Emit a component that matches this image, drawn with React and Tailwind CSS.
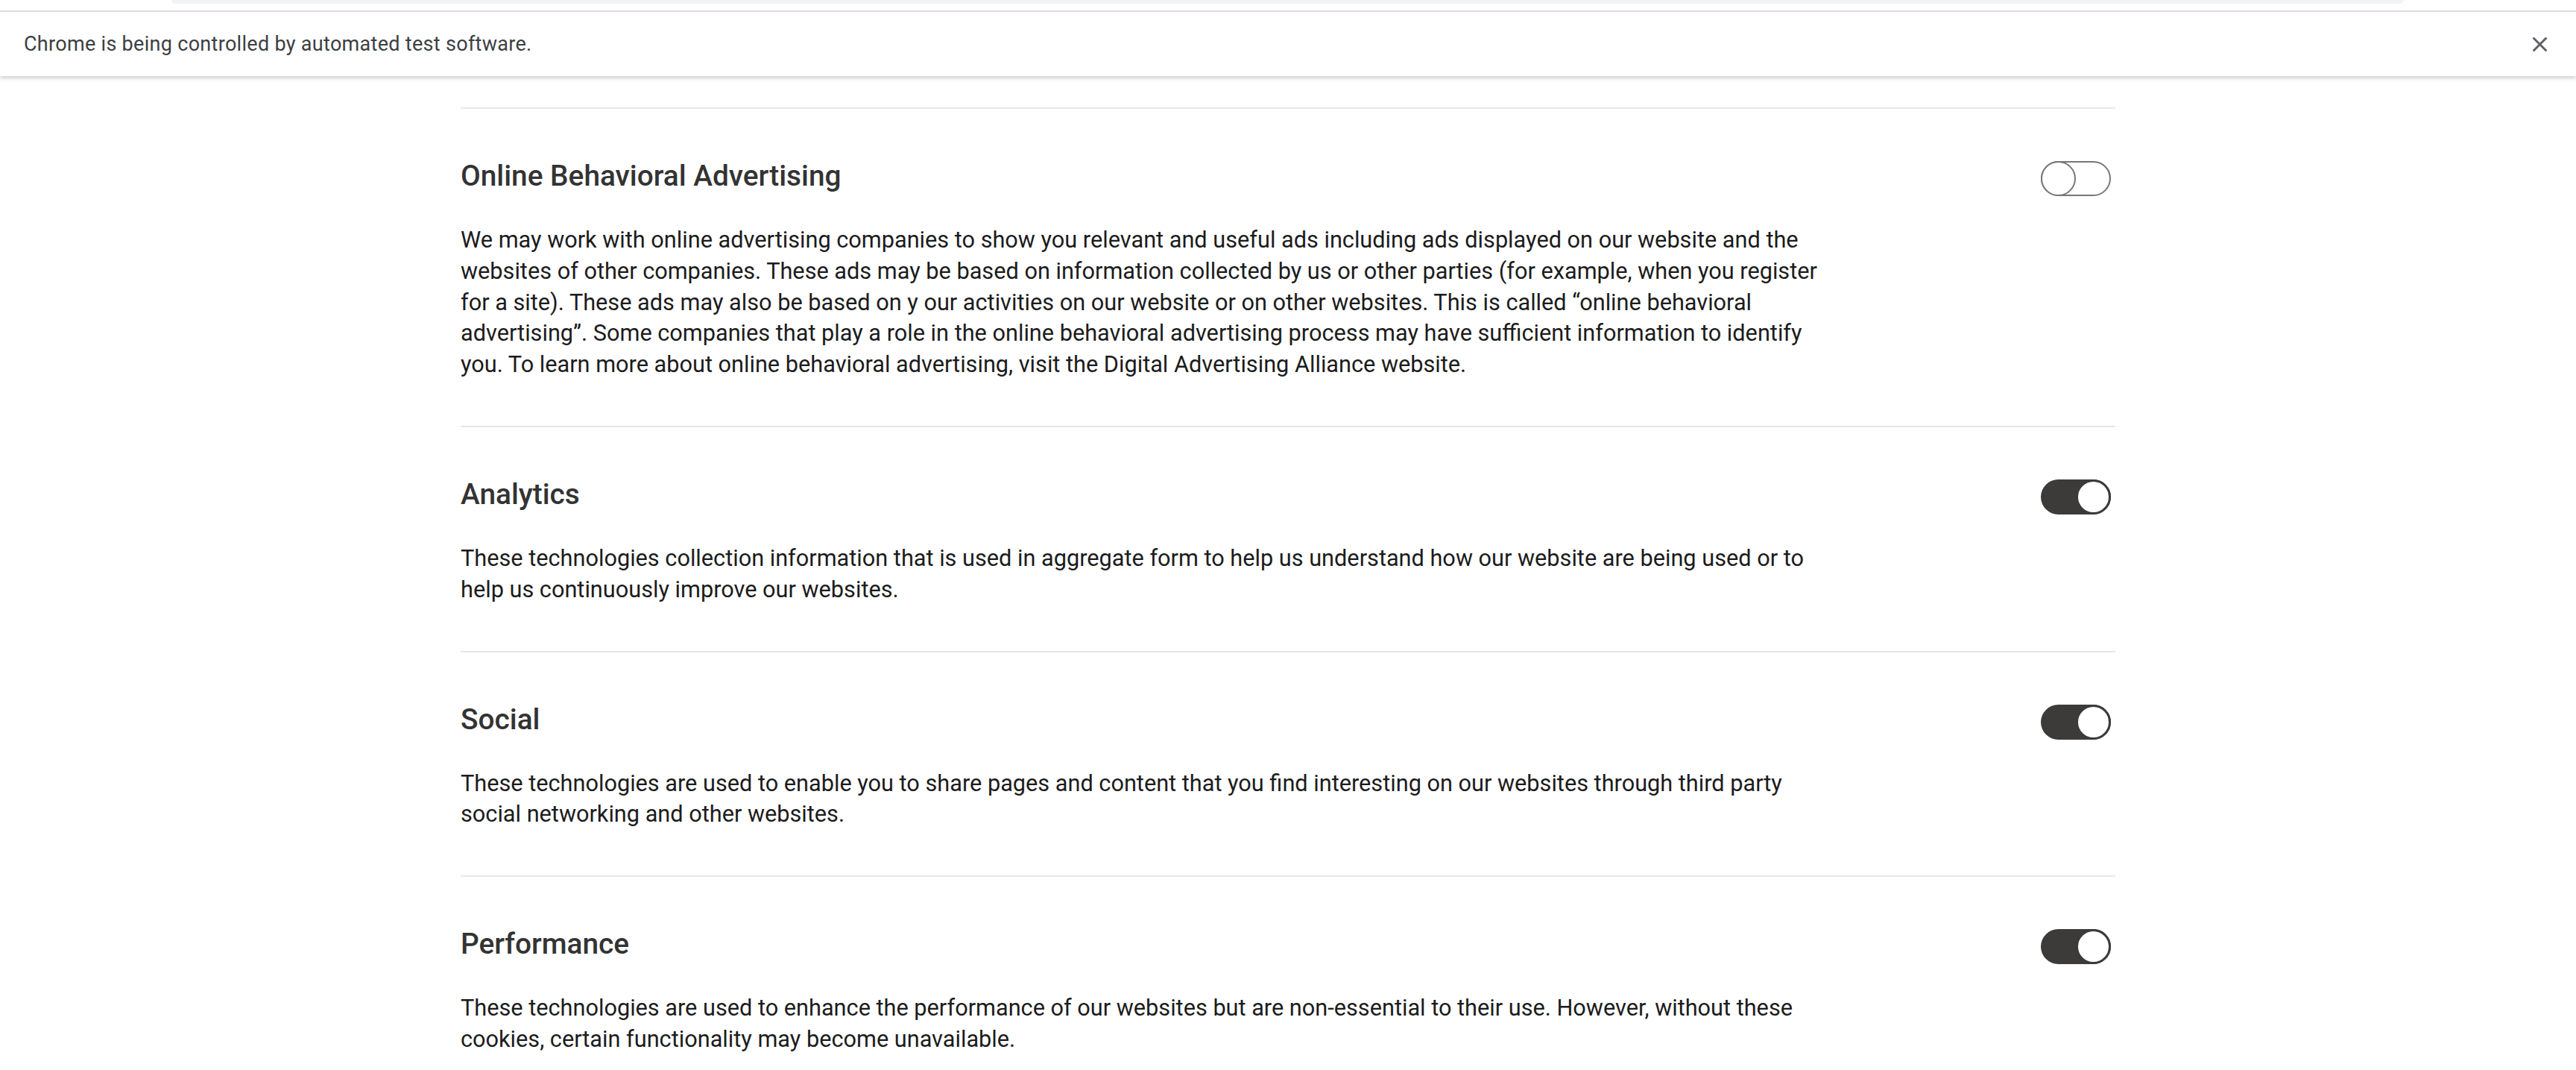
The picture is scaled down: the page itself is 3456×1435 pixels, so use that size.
import React from "react";

const sections = [
  {
    title: "Online Behavioral Advertising",
    on: false,
    text: "We may work with online advertising companies to show you relevant and useful ads including ads displayed on our website and the websites of other companies. These ads may be based on information collected by us or other parties (for example, when you register for a site). These ads may also be based on y our activities on our website or on other websites. This is called \u201conline behavioral advertising\u201d. Some companies that play a role in the online behavioral advertising process may have sufficient information to identify you. To learn more about online behavioral advertising, visit the Digital Advertising Alliance website.",
  },
  {
    title: "Analytics",
    on: true,
    text: "These technologies collection information that is used in aggregate form to help us understand how our website are being used or to help us continuously improve our websites.",
  },
  {
    title: "Social",
    on: true,
    text: "These technologies are used to enable you to share pages and content that you find interesting on our websites through third party social networking and other websites.",
  },
  {
    title: "Performance",
    on: true,
    text: "These technologies are used to enhance the performance of our websites but are non-essential to their use. However, without these cookies, certain functionality may become unavailable.",
  },
];

function Toggle({ on }) {
  if (on) {
    return (
      <div className="relative w-[94px] h-[47px] rounded-full bg-[#3d3b3a] shrink-0 mr-[6px] mt-[4px]">
        <div className="absolute right-0 top-0 w-[47px] h-[47px] rounded-full bg-white border-[3px] border-[#3d3b3a]" />
      </div>
    );
  }
  return (
    <div className="relative w-[94px] h-[47px] rounded-full bg-white border-2 border-[#777777] shrink-0 mr-[6px] mt-[4px]">
      <div className="absolute left-[-2px] top-[-2px] w-[47px] h-[47px] rounded-full bg-white border-2 border-[#777777]" />
    </div>
  );
}

export default function App() {
  return (
    <div
      className="h-screen overflow-hidden bg-white"
      style={{ fontFamily: "Roboto, 'Liberation Sans', sans-serif" }}
    >
      <div className="h-[14px] bg-white">
        <div className="ml-[230px] w-[2995px] h-[5px] bg-[#f1f3f4] rounded-b-[18px]" />
      </div>
      <div className="relative z-10 border-t-2 border-[#dadce0] bg-white h-[88px] flex items-center justify-between pl-[32px] pr-[39px] shadow-[0_3px_5px_rgba(0,0,0,0.18)]">
        <span className="text-[27px] text-[#3c4043] tracking-[0.3px]">
          Chrome is being controlled by automated test software.
        </span>
        <svg width="19" height="19" viewBox="0 0 19 19">
          <path d="M1.5 1.5 L17.5 17.5 M17.5 1.5 L1.5 17.5" stroke="#5f6368" strokeWidth="3" strokeLinecap="square" />
        </svg>
      </div>
      <div className="pt-[42px]">
        <div className="max-w-[2220px] mx-auto">
          {sections.map((s) => (
            <section key={s.title} className="border-t-2 border-[#e6e6e6] pt-[66px] pb-[61px]">
              <div className="flex items-start justify-between h-[48px]">
                <h2 className="text-[38.8px] leading-[48px] font-medium text-[#333333]">{s.title}</h2>
                <Toggle on={s.on} />
              </div>
              <p className="mt-[41px] max-w-[1840px] text-[30.7px] leading-[41.8px] text-[#1c1c1c]">{s.text}</p>
            </section>
          ))}
        </div>
      </div>
    </div>
  );
}
